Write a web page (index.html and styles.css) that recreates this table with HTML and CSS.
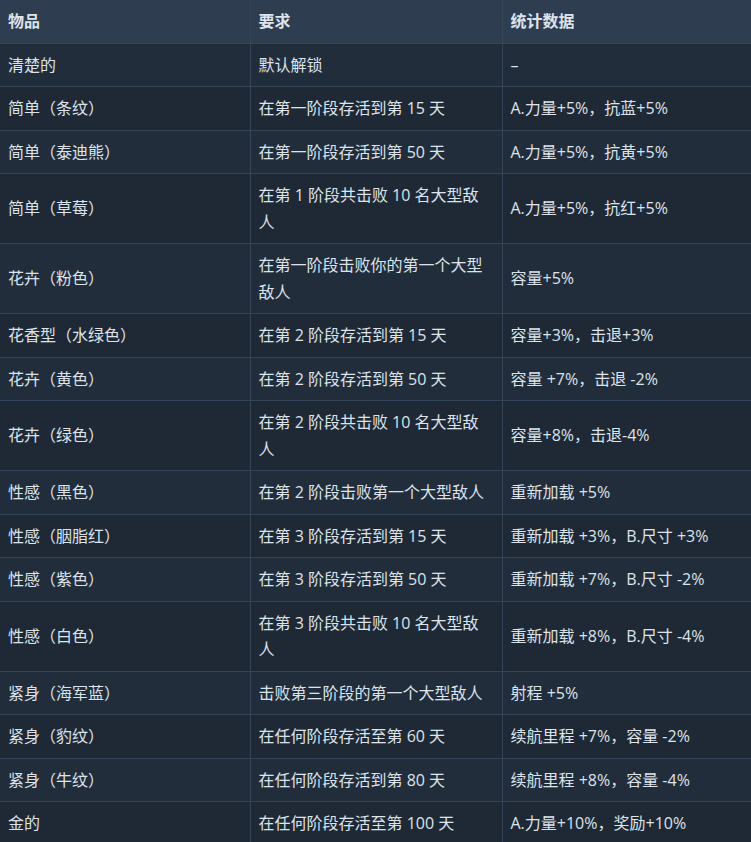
FILE: index.html
```html
<!DOCTYPE html>
<html lang="zh">
<head>
<meta charset="utf-8">
<link rel="stylesheet" href="styles.css">
</head>
<body>
<table class="data">
  <colgroup><col class="c1"><col class="c2"><col class="c3"></colgroup>
  <thead>
    <tr><th>物品</th><th>要求</th><th>统计数据</th></tr>
  </thead>
  <tbody>
    <tr><td>清楚的</td><td>默认解锁</td><td>–</td></tr>
    <tr><td>简单（条纹）</td><td>在第一阶段存活到第 15 天</td><td>A.力量+5%，抗蓝+5%</td></tr>
    <tr><td>简单（泰迪熊）</td><td>在第一阶段存活到第 50 天</td><td>A.力量+5%，抗黄+5%</td></tr>
    <tr><td>简单（草莓）</td><td>在第 1 阶段共击败 10 名大型敌人</td><td>A.力量+5%，抗红+5%</td></tr>
    <tr><td>花卉（粉色）</td><td>在第一阶段击败你的第一个大型敌人</td><td>容量+5%</td></tr>
    <tr><td>花香型（水绿色）</td><td>在第 2 阶段存活到第 15 天</td><td>容量+3%，击退+3%</td></tr>
    <tr><td>花卉（黄色）</td><td>在第 2 阶段存活到第 50 天</td><td>容量 +7%，击退 -2%</td></tr>
    <tr><td>花卉（绿色）</td><td>在第 2 阶段共击败 10 名大型敌人</td><td>容量+8%，击退-4%</td></tr>
    <tr><td>性感（黑色）</td><td>在第 2 阶段击败第一个大型敌人</td><td>重新加载 +5%</td></tr>
    <tr><td>性感（胭脂红）</td><td>在第 3 阶段存活到第 15 天</td><td>重新加载 +3%，B.尺寸 +3%</td></tr>
    <tr><td>性感（紫色）</td><td>在第 3 阶段存活到第 50 天</td><td>重新加载 +7%，B.尺寸 -2%</td></tr>
    <tr><td>性感（白色）</td><td>在第 3 阶段共击败 10 名大型敌人</td><td>重新加载 +8%，B.尺寸 -4%</td></tr>
    <tr><td>紧身（海军蓝）</td><td>击败第三阶段的第一个大型敌人</td><td>射程 +5%</td></tr>
    <tr><td>紧身（豹纹）</td><td>在任何阶段存活至第 60 天</td><td>续航里程 +7%，容量 -2%</td></tr>
    <tr><td>紧身（牛纹）</td><td>在任何阶段存活到第 80 天</td><td>续航里程 +8%，容量 -4%</td></tr>
    <tr><td>金的</td><td>在任何阶段存活至第 100 天</td><td>A.力量+10%，奖励+10%</td></tr>
  </tbody>
</table>
</body>
</html>
```

FILE: styles.css
```css
html, body {
  margin: 0;
  padding: 0;
  background: #1f2935;
}
.data {
  width: 751px;
  border-collapse: collapse;
  table-layout: fixed;
  font-family: "Open Sans", "Noto Sans CJK SC", sans-serif;
  font-size: 16px;
  line-height: 26.5px;
  color: #dde3ea;
}
.c1 { width: 250px; }
.c2 { width: 252px; }
.c3 { width: 249px; }
.data th, .data td {
  text-align: left;
  vertical-align: middle;
  padding: 8px 8px;
  border: 1px solid #34455a;
}
.data tr > :first-child { border-left: none; }
.data tr > :last-child { border-right: none; }
.data thead tr > * { border-top: none; }
.data th {
  background: #2e3d50;
  font-weight: 700;
}
.data tbody tr:nth-child(odd) { background: #222d3c; }
.data tbody tr:nth-child(even) { background: #1f2935; }
```
